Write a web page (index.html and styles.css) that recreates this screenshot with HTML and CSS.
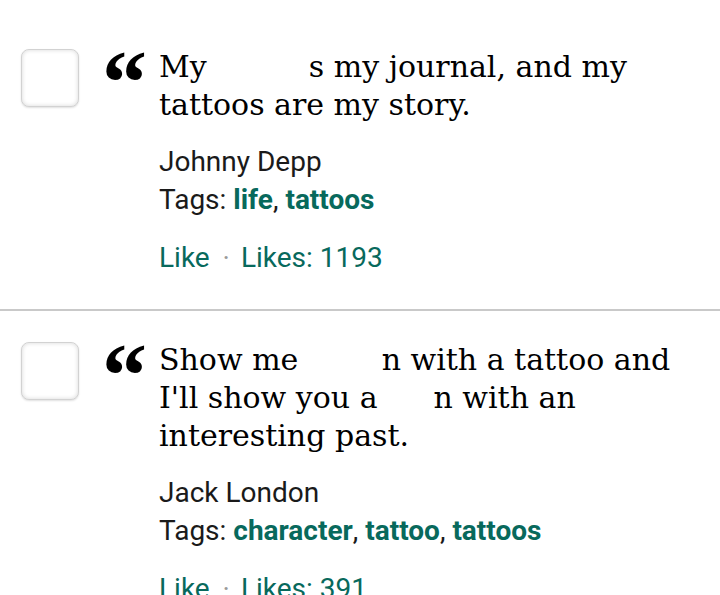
FILE: index.html
```
<!DOCTYPE html>
<html>

<head>
    <title> Quotes </title>
    <link rel="stylesheet" href="styles.css">
</head>

<body>
    <div id="listaCitate">
        <div class="citat">
            <div class="bifa"></div>
            <div class="ghilimele">&ldquo;</div>
            <div class="continut">
                <p class="text">My <span class="ascuns">body i</span>s my journal, and my tattoos are my story.</p>
                <p class="autor">Johnny Depp</p>
                <p class="etichete">Tags: <a href="#">life</a>, <a href="#">tattoos</a></p>
                <p class="aprecieri"><a href="#">Like</a> <span class="punct">&middot;</span> Likes: 1193</p>
            </div>
        </div>

        <div class="citat">
            <div class="bifa"></div>
            <div class="ghilimele">&ldquo;</div>
            <div class="continut">
                <p class="text">Show me <span class="ascuns">a ma</span>n with a tattoo and I'll show you a<span class="ascuns"> ma</span>n with an interesting past.</p>
                <p class="autor">Jack London</p>
                <p class="etichete">Tags: <a href="#">character</a>, <a href="#">tattoo</a>, <a href="#">tattoos</a></p>
                <p class="aprecieri"><a href="#">Like</a> <span class="punct">&middot;</span> Likes: 391</p>
            </div>
        </div>
    </div>
</body>

</html>
```

FILE: styles.css
```
html {
    font-family: "Roboto", sans-serif;
}

body {
    margin: 0px;
    background-color: white;
    overflow: hidden;
}

#listaCitate {
    padding-top: 18px;
}

.citat {
    display: flex;
    flex-direction: row;
    padding: 31px 20px 0px 21px;
    height: 260px;
    border-bottom: 2px solid #c9c9c9;
}

.bifa {
    flex: none;
    width: 56px;
    height: 56px;
    border: 1px solid #d2d2d2;
    border-radius: 8px;
    box-shadow: inset 0px 0px 4px #d8d8d8, 0px 1px 2px #e0e0e0;
    background-color: white;
}

.ghilimele {
    flex: none;
    width: 57px;
    margin-left: 23px;
    margin-top: -11px;
    font-family: "Liberation Serif", serif;
    font-weight: bold;
    font-size: 90px;
    line-height: 90px;
    height: 40px;
    color: black;
}

.continut {
    flex: 1;
}

.text {
    margin: 0px;
    font-family: "DejaVu Serif", serif;
    font-size: 30px;
    line-height: 38px;
    color: black;
    margin-top: -1px;
}

.ascuns {
    color: transparent;
}

.autor {
    margin: 19px 0px 0px 0px;
    font-size: 28px;
    line-height: 38px;
    color: #1a1a1a;
}

.etichete {
    margin: 0px;
    font-size: 28px;
    line-height: 38px;
    color: #1a1a1a;
}

.etichete a {
    color: #08695c;
    font-weight: bold;
    text-decoration: none;
}

.aprecieri {
    margin: 20px 0px 0px 0px;
    font-size: 28px;
    line-height: 38px;
    color: #08695c;
}

.aprecieri a {
    color: #08695c;
    text-decoration: none;
}

.punct {
    color: #9a9a9a;
    margin: 0px 4px 0px 6px;
}
```
